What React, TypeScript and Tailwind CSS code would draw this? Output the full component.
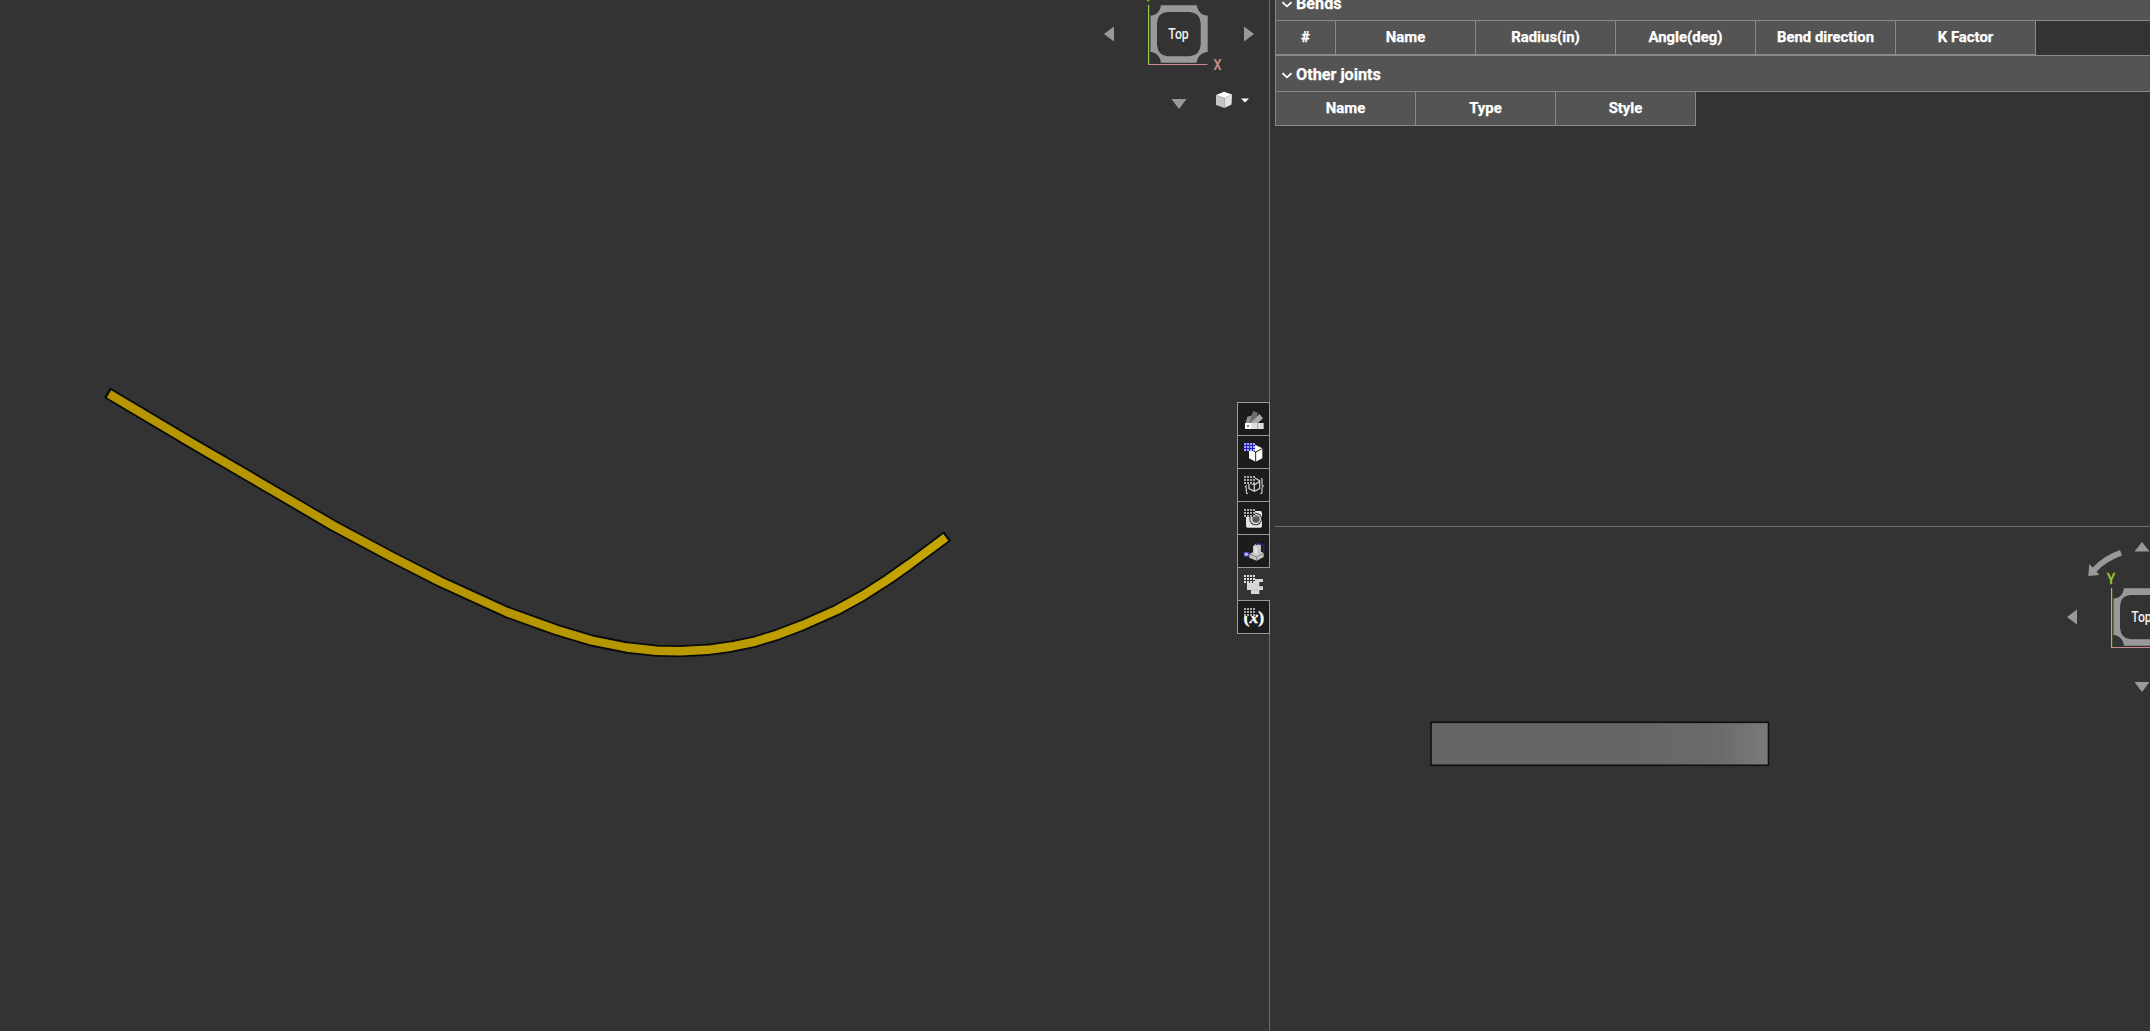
import { ReactNode } from "react";

type Column = { label: string; narrow?: boolean };

type SectionProps = {
    title: string;
    columns: Column[];
};

const bendColumns: Column[] = [
    { label: "#", narrow: true },
    { label: "Name" },
    { label: "Radius(in)" },
    { label: "Angle(deg)" },
    { label: "Bend direction" },
    { label: "K Factor" },
];

const jointColumns: Column[] = [{ label: "Name" }, { label: "Type" }, { label: "Style" }];

function TableSection({ title, columns }: SectionProps) {
    return (
        <section className="border-l border-[#8a8a8a]">
            <div className="flex h-[37px] items-center border-y border-[#8a8a8a] bg-[#545454] pt-[3px] pl-1.5">
                <svg className="h-[7px] w-[10px]" viewBox="0 0 10 7">
                    <path d="M.5 1.2 5 5.3 9.5 1.2" fill="none" stroke="#fff" strokeWidth="1.8" />
                </svg>
                <span className="ml-1 text-[16.2px] font-bold text-white [-webkit-text-stroke:0.25px_white]">{title}</span>
            </div>
            <div className="flex">
                {columns.map((col) => (
                    <div
                        key={col.label}
                        className={`flex h-[34px] items-center justify-center border-r border-b border-[#8a8a8a] bg-[#545454] text-[14.9px] font-bold text-white [-webkit-text-stroke:0.25px_white] ${col.narrow ? "w-[60px]" : "w-[140px]"}`}
                    >
                        {col.label}
                    </div>
                ))}
            </div>
        </section>
    );
}

// orientation cube with axes and rotate arrows
function ViewCube({ className }: { className: string }) {
    return (
        <svg className={`absolute h-[165px] w-[162px] ${className}`} viewBox="0 0 162 165">
            <g fill="#999">
                <path d="M6 84 16 76.5V91.5ZM156 84 146 76.5V91.5ZM81 159 73.5 149H88.5ZM81 9 73.5 18.5H88.5Z" />
                <path d="M28.3 31.3 27.3 43 38.5 42 35.5 38.7Q44 29 61 22.5L59 17Q42 23 31.8 34.5Z" />
                <path
                    fillRule="evenodd"
                    d="M62.7 55.3H99V57Q101 64 108 65.5H109.7V102H108Q100 104 98.5 112.8H62.7V111Q61 104 54 102H52.5V65.5H54Q61 64 62.7 57ZM69.5 62Q59.5 62.5 59 73V95Q60 105.5 69.5 106.3H91.5Q102 105 102.7 95V73Q102 62.5 91.5 62Z"
                />
            </g>
            <path d="M50.6 55V114.5" stroke="#92cf48" strokeWidth="1.2" />
            <path d="M50 114.5H109.5" stroke="#c98b8d" strokeWidth="1.2" />
            <text x="80.5" y="88.5" textAnchor="middle" fill="#f0f0f0" fontSize="14.5" fontWeight="500" textLength="20.5" lengthAdjust="spacingAndGlyphs">
                Top
            </text>
            <text x="50" y="51" textAnchor="middle" fill="#9ad040" stroke="#8a9a10" strokeWidth=".4" fontSize="15" fontWeight="500" textLength="8.5" lengthAdjust="spacingAndGlyphs">
                Y
            </text>
            <text x="119.5" y="119.8" textAnchor="middle" fill="#c98b8d" stroke="#c98b8d" strokeWidth=".2" fontSize="15" fontWeight="500" textLength="8" lengthAdjust="spacingAndGlyphs">
                X
            </text>
        </svg>
    );
}

// 3 icon units = 1px, so the dots stay on whole pixels
function DotGrid({ fill = "#aaa", back = "#1c1c1c" }: { fill?: string; back?: string }) {
    return (
        <g>
            <rect x="18" y="21" width="33" height="24" fill={back} />
            {[0, 1, 2].map((r) =>
                [0, 1, 2, 3].map((c) => (
                    <rect key={`${r}-${c}`} x={18 + c * 9} y={21 + r * 9} width="6" height="6" fill={fill} />
                ))
            )}
        </g>
    );
}

const tools: { name: string; active?: boolean; icon: ReactNode }[] = [
    {
        name: "appearance",
        icon: (
            <>
                <path d="M46 24 60 30 48 62 30 59Z" fill="#6d6d6d" />
                <path d="M64 33 75 46 54 65 38 60Z" fill="#a9a9a9" />
                <path d="M28 41 40 38 34 60H23Z" fill="#929292" />
                <rect x="21" y="60" width="56" height="18" fill="#ddd" />
                <rect x="21" y="60" width="19" height="18" rx="4" fill="#fff" />
                <rect x="58" y="60" width="2" height="18" fill="#999" />
                <circle cx="30" cy="69" r="3" fill="#555" />
            </>
        ),
    },
    {
        name: "configurations",
        icon: (
            <>
                <path d="M53 27 73 37V67L53 77 33 67V37Z" fill="#fff" />
                <path d="M33 38 53 48 73 38M53 48V77" stroke="#1c1c1c" strokeWidth="3" fill="none" />
                <DotGrid fill="#a8a8f4" back="#2424b4" />
            </>
        ),
    },
    {
        name: "part variables",
        icon: (
            <>
                <path d="M50 27 65 35V59L49 67 33 59V40ZM33 40 49 48 65 37M49 48V67" stroke="#ccc" strokeWidth="4" fill="none" />
                <path d="M69 28Q73 29 72 35V44Q72 50 77 51 72 52 72 58V68Q72 74 67 74M25 48V50Q25 52 21 53 25 54 25 60V68Q25 74 30 74" stroke="#ccc" strokeWidth="3.5" fill="none" />
                <DotGrid />
            </>
        ),
    },
    {
        name: "render",
        icon: (
            <>
                <rect x="24" y="27" width="48" height="50" rx="5" fill="#e4e4e4" />
                <circle cx="53" cy="51" r="19" fill="#333" />
                <circle cx="53" cy="51" r="16" fill="#ddd" />
                <circle cx="54" cy="51" r="11" fill="#555" />
                <path d="M47 47Q53 37 61 46" stroke="#888" strokeWidth="4" fill="none" />
                <DotGrid />
            </>
        ),
    },
    {
        name: "mate",
        icon: (
            <>
                <path d="M46 33 54 26 69 30V50L77 54V66L56 77 34 68V57L46 51Z" fill="#c5c5c5" />
                <path d="M46 33 59 37V59L46 54Z" fill="#dedede" />
                <path d="M34 57 56 66 77 55M56 66V77" stroke="#666" strokeWidth="2" fill="none" />
                <path d="M54 29 64 25 77 31V50" stroke="#2929a5" strokeWidth="3.5" fill="none" />
                <rect x="19" y="53" width="12" height="10" fill="#c5c5ff" stroke="#5555bd" strokeWidth="3" />
                <path d="M31 58H37" stroke="#5555bd" strokeWidth="3" />
            </>
        ),
    },
    {
        name: "sheet metal",
        active: true,
        icon: (
            <>
                <path d="M27 33H75V42H64V55H75V66H64V78H39V66H27Z" fill="#d7d7d7" />
                <path d="M39 66H64" stroke="#bbb" strokeWidth="2" />
                <DotGrid fill="#ddd" back="#333" />
            </>
        ),
    },
    {
        name: "variables",
        icon: (
            <>
                <text x="47.5" y="66" textAnchor="middle" fill="#fff" stroke="#fff" fontSize="48" fontWeight="bold" textLength="62" lengthAdjust="spacingAndGlyphs" className="font-['Liberation_Serif',serif]">
                    (<tspan fontStyle="italic">x</tspan>)
                </text>
                <DotGrid />
            </>
        ),
    },
];

function Toolbar() {
    return (
        <div className="absolute top-[402px] left-[1237px] z-10 flex w-[33px] flex-col border-b border-[#999]">
            {tools.map((tool) => (
                <button
                    key={tool.name}
                    aria-label={tool.name}
                    className={`h-[33px] border-t border-l border-[#999] ${tool.active ? "bg-[#333]" : "border-r bg-[#1c1c1c]"}`}
                >
                    <svg className="h-8 w-[31px]" viewBox="0 0 93 96">
                        {tool.icon}
                    </svg>
                </button>
            ))}
        </div>
    );
}

const strip =
    "190,442 245,474 300,506.2 333,525.5 390,556 440,581.5 506.7,612 556.7,630 591.7,640.5 626.7,647.5 656.7,650.7 680,651.2 708,649.8 731.7,646.5 753,642.2 776.7,635 803,625 836.7,610 863,595.5 888,579.5 910,564";

function FoldedView() {
    return (
        <svg className="h-full w-full" viewBox="0 0 1269 1031">
            <defs>
                <linearGradient id="gold" gradientUnits="userSpaceOnUse" x1="600" y1="0" x2="950" y2="0">
                    <stop offset="0" stopColor="#b69600" />
                    <stop offset="1" stopColor="#c4a500" />
                </linearGradient>
            </defs>
            <polyline points={`107,392.7 ${strip} 947.6,536`} fill="none" stroke="#0b0b0b" strokeWidth="12" strokeLinejoin="round" />
            <polyline points={`109,393.9 ${strip} 945.8,537.3`} fill="none" stroke="url(#gold)" strokeWidth="8.4" strokeLinejoin="round" />
        </svg>
    );
}

export default function App() {
    return (
        <div className="flex h-[1031px] w-[2150px] overflow-hidden bg-[#333] font-[Roboto,sans-serif]">
            <main className="relative w-[1269px] shrink-0">
                <FoldedView />
                <ViewCube className="-top-[50px] left-[1098px]" />
                <button aria-label="view options" className="absolute top-[91px] left-[1215px] flex items-center gap-2">
                    <svg className="h-[18px] w-[18px]" viewBox="0 0 18 18">
                        <path d="M9 .7 17 3.5 9.5 7 1 4Z" fill="#fff" />
                        <path d="M1 4 9.5 7V17L1 14Z" fill="#c4c4c4" />
                        <path d="M17 3.5 9.5 7V17L16.5 13.5Z" fill="#e4e4e4" />
                    </svg>
                    <svg className="h-[5px] w-[8px]" viewBox="0 0 8 5">
                        <path d="M0 .5H8L4 4.5Z" fill="#fff" />
                    </svg>
                </button>
                <Toolbar />
            </main>
            <aside className="flex min-w-0 flex-1 flex-col border-l border-[#6c6c6c]">
                <div className="h-[526px] shrink-0 overflow-hidden pl-[5px]">
                    <div className="-mt-4">
                        <TableSection title="Bends" columns={bendColumns} />
                        <TableSection title="Other joints" columns={jointColumns} />
                    </div>
                </div>
                <div className="ml-[5px] h-px shrink-0 bg-[#6c6c6c]" />
                <div className="relative flex-1 overflow-hidden">
                    <svg className="h-[504px] w-[880px]" viewBox="1270 527 880 504">
                        <defs>
                            <linearGradient id="flat" x1="0" y1="0" x2="1" y2="0">
                                <stop offset=".6" stopColor="#666" />
                                <stop offset=".85" stopColor="#6b6b6b" />
                                <stop offset="1" stopColor="#7a7a7a" />
                            </linearGradient>
                        </defs>
                        <rect x="1431" y="722.3" width="337.5" height="43" fill="url(#flat)" stroke="#121212" strokeWidth="1.7" />
                    </svg>
                    <ViewCube className="top-[6px] left-[791px]" />
                </div>
            </aside>
        </div>
    );
}
